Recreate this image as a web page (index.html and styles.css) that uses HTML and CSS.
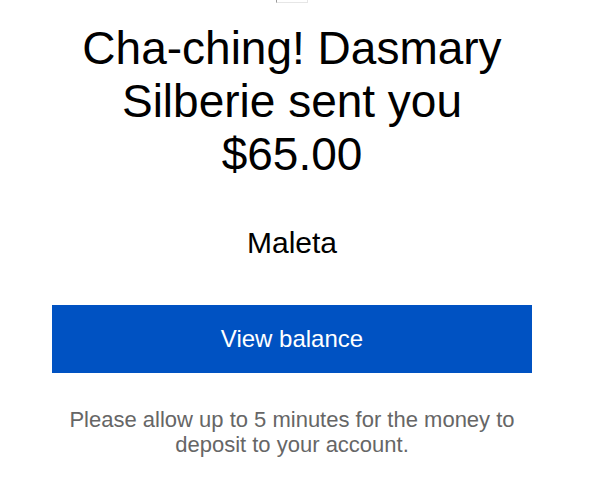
FILE: index.html
```html
<!DOCTYPE html>
<html lang="en">
<head>
    <meta charset="UTF-8">
    <meta name="viewport" content="width=device-width, initial-scale=1.0">
    <title>Payment received</title>
    <link rel="stylesheet" href="styles.css">
</head>
<body>
    <div class="mail">
        <div class="logo-slot"></div>

        <h1 class="headline">Cha-ching! Dasmary Silberie sent you $65.00</h1>

        <p class="memo">Maleta</p>

        <a class="cta" href="#">View balance</a>

        <p class="note">Please allow up to 5 minutes for the money to deposit to your account.</p>
    </div>
</body>
</html>
```

FILE: styles.css
```css
body {
    margin: 0;
    background: #fff;
    font-family: "Liberation Sans", Arial, sans-serif;
}

.mail {
    width: 480px;
    margin: 0 0 0 52px;
    display: flex;
    flex-direction: column;
    align-items: center;
    text-align: center;
}

.logo-slot {
    width: 30px;
    height: 30px;
    margin-top: -29px;
    border: 1px solid #e6e6e6;
    border-left-color: #9a9a9a;
}

.headline {
    margin: 19px 0 0;
    font-size: 46px;
    font-weight: normal;
    line-height: 53px;
    color: #000;
}

.memo {
    margin: 45px 0 0;
    font-size: 30px;
    line-height: 34px;
    color: #000;
}

.cta {
    align-self: stretch;
    margin-top: 45px;
    height: 68px;
    display: flex;
    align-items: center;
    justify-content: center;
    background: #0052c2;
    color: #fff;
    font-size: 24px;
    text-decoration: none;
}

.note {
    margin: 34px 0 0;
    font-size: 22px;
    line-height: 25px;
    color: #666;
}
```
